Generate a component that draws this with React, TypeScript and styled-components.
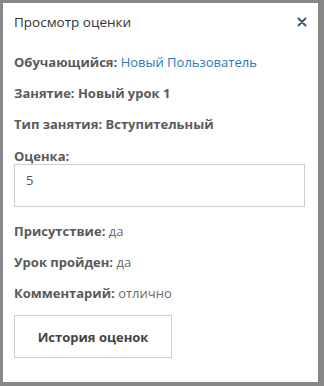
import styled, {createGlobalStyle} from 'styled-components';

const FONT = '"Open Sans", "Noto Sans", sans-serif';

const GlobalStyle = createGlobalStyle`
  html, body {
    margin: 0;
    padding: 0;
    background: #878787;
  }
  body {
    font-family: ${FONT};
  }
`;

const fields = [
  {label: 'Присутствие:', value: 'да'},
  {label: 'Урок пройден:', value: 'да'},
  {label: 'Комментарий:', value: 'отлично'},
];

const App = () => {
  return (
    <>
      <GlobalStyle />
      <StyledBackdrop>
        <StyledModal>
          <StyledHeader>
            <StyledTitle>Просмотр оценки</StyledTitle>
            <StyledClose aria-label="close">
              <svg width="10" height="10" viewBox="0 0 10 10">
                <path d="M1.5 1.5 L8.5 8.5 M8.5 1.5 L1.5 8.5" stroke="#3d5a77" strokeWidth="2" strokeLinecap="round" />
              </svg>
            </StyledClose>
          </StyledHeader>
          <StyledBody>
            <StyledRow>
              <StyledLabel>Обучающийся:</StyledLabel> <StyledLink>Новый Пользователь</StyledLink>
            </StyledRow>
            <StyledRow>
              <StyledLabel>Занятие: Новый урок 1</StyledLabel>
            </StyledRow>
            <StyledRow>
              <StyledLabel>Тип занятия: Вступительный</StyledLabel>
            </StyledRow>
            <StyledGrade>
              <StyledLabel>Оценка:</StyledLabel>
              <StyledInputBox>5</StyledInputBox>
            </StyledGrade>
            {fields.map((f) => (
              <StyledRow key={f.label}>
                <StyledLabel>{f.label}</StyledLabel> <StyledValue>{f.value}</StyledValue>
              </StyledRow>
            ))}
            <StyledButton>История оценок</StyledButton>
          </StyledBody>
        </StyledModal>
      </StyledBackdrop>
    </>
  );
};

export default App;

const StyledBackdrop = styled.div`
  width: 324px;
  height: 386px;
  padding: 3px 6px 4px 3px;
  box-sizing: border-box;
  overflow: hidden;
`;

const StyledModal = styled.div`
  width: 315px;
  height: 379px;
  background: #ffffff;
  box-sizing: border-box;
`;

const StyledHeader = styled.div`
  display: flex;
  justify-content: space-between;
  align-items: center;
  padding: 10px 11px 0 11px;
  height: 18px;
`;

const StyledTitle = styled.h2`
  margin: 0;
  font-size: 13.5px;
  font-weight: 400;
  color: #333333;
`;

const StyledClose = styled.button`
  border: none;
  background: none;
  padding: 0;
  display: flex;
  cursor: pointer;
`;

const StyledBody = styled.div`
  display: flex;
  flex-direction: column;
  padding: 22px 13px 0 11px;
`;

const StyledRow = styled.div`
  font-size: 13px;
  line-height: 18px;
  margin-bottom: 13px;
  white-space: nowrap;
`;

const StyledLabel = styled.span`
  font-weight: 700;
  color: #5a5a5a;
`;

const StyledLink = styled.a`
  color: #2a78b8;
`;

const StyledValue = styled.span`
  color: #6a6a6a;
`;

const StyledGrade = styled.div`
  display: flex;
  flex-direction: column;
  font-size: 13px;
  line-height: 16px;
  margin: 2px 0 15px;
`;

const StyledInputBox = styled.div`
  height: 43px;
  box-sizing: border-box;
  border: 1px solid #c9ced6;
  padding: 5px 11px;
  color: #555555;
  font-size: 13px;
  line-height: 20px;
`;

const StyledButton = styled.button`
  align-self: flex-start;
  width: 158px;
  height: 43px;
  background: #ffffff;
  border: 1px solid #c9ced6;
  font-family: ${FONT};
  font-size: 13px;
  font-weight: 700;
  color: #444444;
`;
